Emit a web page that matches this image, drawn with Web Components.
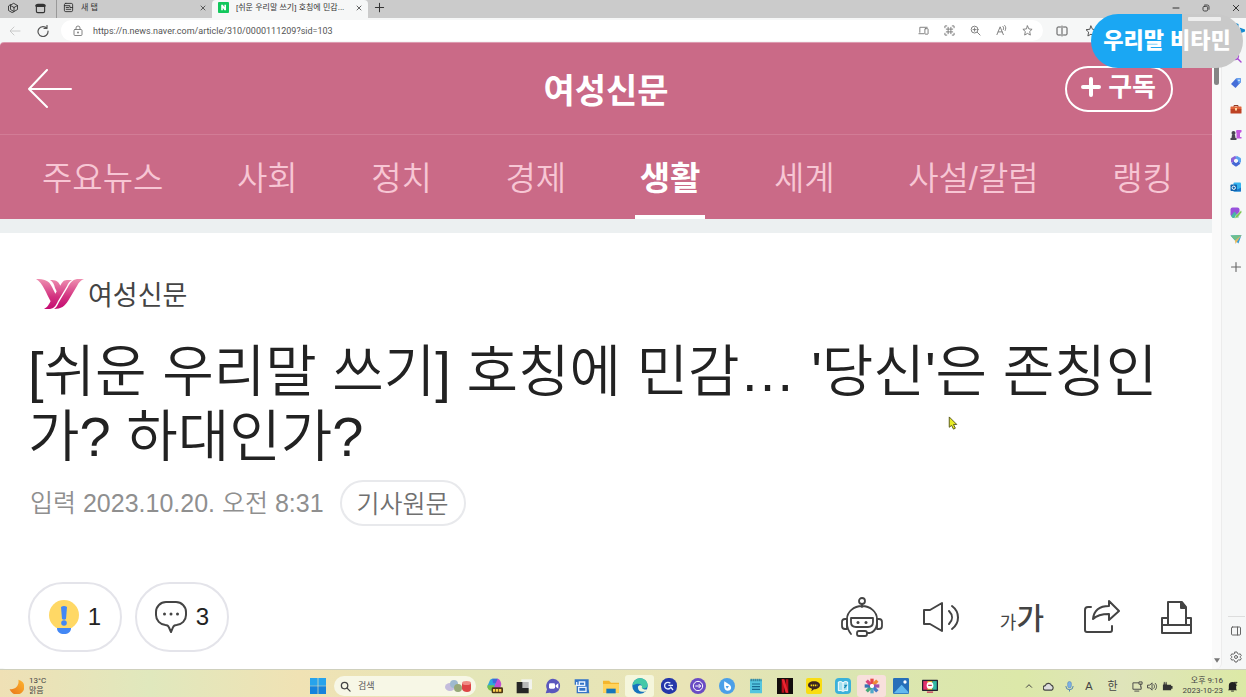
<!DOCTYPE html>
<html lang="ko">
<head>
<meta charset="utf-8">
<title>여성신문 - 생활</title>
<style>
body{margin:0;font-family:"Liberation Sans","Noto Sans CJK KR",sans-serif;color:#222;background:#f6f7f7}
</style>
</head>
<body>
<desktop-screen></desktop-screen>
<script>
const define=(name,css,html)=>{
  const tpl=document.createElement('template');
  tpl.innerHTML=`<style>*{box-sizing:border-box}button{font:inherit;color:inherit;background:none;border:0;padding:0;margin:0}a{color:inherit;text-decoration:none}${css}</style>${html}`;
  customElements.define(name,class extends HTMLElement{
    constructor(){super();this.attachShadow({mode:'open'}).append(tpl.content.cloneNode(true));}
  });
};

/* Each entry: viewBox, markup. Line icons inherit currentColor. */
const line='fill="none" stroke="currentColor" stroke-linecap="round" stroke-linejoin="round"';
const ICONS={
  workspaces:['0 0 24 24',`<g ${line} stroke-width="1.800"><path d="M14 3l7 4v8l-7 4-7-4V7z"/><path d="M14 11v8M14 11l7-4M14 11L7 7"/><path d="M7 5L3 8v9l7 4 3-1"/></g>`],
  actions:['0 0 24 24',`<g ${line} stroke-width="2.400"><rect x="3" y="3" width="18" height="18" rx="3"/><path d="M3 6h18" stroke-width="5"/></g>`],
  newtab:['0 0 24 24',`<g ${line} stroke-width="2"><rect x="3" y="3" width="18" height="18" rx="3"/><path d="M3 8h12v4h6M7 12h5M7 16h10"/></g>`],
  naver:['0 0 24 24','<rect width="24" height="24" rx="2" fill="#12c75c"/><path d="M7 18V6h3.500l3.500 5.500V6h3.500v12H14l-3.500-5.500V18z" fill="#fff"/>'],
  close:['0 0 24 24',`<path ${line} stroke-width="3" d="M4 4l16 16M20 4L4 20"/>`],
  plus:['0 0 24 24',`<path ${line} stroke-width="2.200" d="M12 3v18M3 12h18"/>`],
  boldplus:['0 0 20 20',`<path ${line} stroke-width="4" d="M10 2v16M2 10h16"/>`],
  min:['0 0 24 24',`<path ${line} stroke-width="3" d="M3 12h18"/>`],
  restore:['0 0 24 24',`<g ${line} stroke-width="2.600"><rect x="3" y="7" width="14" height="14" rx="4"/><path d="M8 3h8a5 5 0 0 1 5 5v8"/></g>`],
  back:['0 0 24 24',`<path ${line} stroke-width="1.800" d="M22 12H3M10 4l-8 8 8 8"/>`],
  reload:['0 0 24 24',`<path ${line} stroke-width="2.400" d="M20 6v-5M20 7h-6M20 7a10 10 0 1 0 2 5"/>`],
  lock:['0 0 24 24',`<g ${line} stroke-width="1.800"><rect x="4" y="9" width="16" height="12" rx="2"/><path d="M8 9V6a4 4 0 0 1 8 0v3"/></g><circle cx="12" cy="15" r="1.800" fill="currentColor"/>`],
  device:['0 0 24 24',`<g ${line} stroke-width="2"><path d="M4 16V5h16M2 19h11"/><rect x="15" y="8" width="7" height="12" rx="1"/></g>`],
  qr:['0 0 24 24',`<g ${line} stroke-width="2"><path d="M2 6V2h4M18 2h4v4M22 18v4h-4M6 22H2v-4M9 5v14M15 5v14M5 9h14M5 15h14"/></g>`],
  zoomin:['0 0 24 24',`<g ${line} stroke-width="2"><circle cx="10" cy="10" r="7.500"/><path d="M16 16l6 6M10 6.500v7M6.500 10h7"/></g>`],
  read:['0 0 24 24',`<g ${line} stroke-width="2"><path d="M2 21L9 4l7 17M5 15h8M15 3c2 2 2 4 1 7M19 1c3 3 3 7 1 11"/></g>`],
  star:['0 0 24 24',`<path ${line} stroke-width="2" d="M12 2l3 6.600 7 .8-5.200 4.800L18.200 22 12 18.300 5.800 22l1.400-7.800L2 9.400l7-.8z"/>`],
  split:['0 0 24 24',`<g ${line} stroke-width="2"><path d="M9 4H4a2 2 0 0 0-2 2v12a2 2 0 0 0 2 2h5M15 4h5a2 2 0 0 1 2 2v12a2 2 0 0 1-2 2h-5M12 2v20"/></g>`],
  panel:['0 0 24 24',`<g ${line} stroke-width="2"><rect x="3" y="4" width="18" height="16" rx="2"/><path d="M15 4v16"/></g>`],
  gear:['0 0 24 24',`<g ${line} stroke-width="2"><path d="M10 2h4l1 3 2.500 1.400 3-.7 2 3.500-2.200 2.300v1l2.200 2.300-2 3.500-3-.7L15 19l-1 3h-4l-1-3-2.500-1.400-3 .7-2-3.500 2.200-2.300v-1L1.500 9.200l2-3.500 3 .7L9 5z"/><circle cx="12" cy="12" r="3"/></g>`],
  tag:['0 0 24 24','<path d="M12 3l9-1 1 8-11 12L2 14z" fill="#466ed8"/><path d="M12 3l9-1 1 8-4 4z" fill="#68a5f0"/><circle cx="18" cy="6.500" r="1.600" fill="#fff"/>'],
  toolbox:['0 0 24 24','<path d="M8 8V5h8v3" fill="none" stroke="#8e3b25" stroke-width="2"/><rect x="1" y="7" width="22" height="6" rx="1" fill="#e0653a"/><rect x="1" y="12" width="22" height="9" rx="1" fill="#bd4224"/><rect x="10" y="10" width="4" height="5" fill="#ffd8a0"/>'],
  chess:['0 0 24 24','<path d="M13 2h10v4l-3 2v8h3v3H13V8l-1-2z" fill="#c256df"/><circle cx="7" cy="8" r="4" fill="#4a4653"/><path d="M4 11h6l1 7h2v4H1v-4h2z" fill="#4a4653"/>'],
  office:['0 0 24 24','<g fill="none" stroke-width="6" stroke-linejoin="round"><path d="M5 15V8l7-4" stroke="#8a62d8"/><path d="M12 4l7 4v7" stroke="#5ba3f0"/><path d="M19 15l-7 5-7-5" stroke="#4668d4"/></g>'],
  outlook:['0 0 24 24','<rect x="7" y="3" width="15" height="18" rx="2" fill="#35b3ee"/><path d="M7 13l8 4 7-4v8H7z" fill="#1976c9"/><rect x="1" y="7" width="13" height="13" rx="1.500" fill="#0f62ac"/><circle cx="7.500" cy="13.500" r="3.300" fill="none" stroke="#fff" stroke-width="2"/>'],
  designer:['0 0 24 24','<rect x="1" y="1" width="18" height="18" rx="4" fill="#9852dc"/><path d="M2 18l7-9 9 11-3 2H5z" fill="#49b6a6"/><path d="M22 7L12 17l-3 6 6-2 9-11z" fill="#7bc74d" stroke="#f6f7f7"/>'],
  plane:['0 0 24 24','<path d="M1 5l22-1-6 17-7-6z" fill="#379fdc"/><path d="M1 5l22-1-13 11z" fill="#6fc08a"/><path d="M10 15L23 4 11 22z" fill="#e7b95b"/>'],
  bing:['0 0 24 24','<path d="M3 2l6 2v14l4-2-2-5 11 4v4L9 24l-6-3z" fill="#168bd2"/>'],
  search:['0 0 24 24',`<g ${line} stroke-width="2.800"><circle cx="10" cy="10" r="7"/><path d="M15.500 15.500L22 22"/></g>`],
  arrow:['0 0 44 40',`<path ${line} stroke-width="2" d="M43 20H1M19 1L1 20l18 18"/>`],
  ymark:['0 0 48 30','<defs><linearGradient id="g" x1="0" y1="0" x2="0" y2="30" gradientUnits="userSpaceOnUse"><stop offset="0" stop-color="#ee8fb0"/><stop offset=".6" stop-color="#d2307f"/><stop offset="1" stop-color="#c40a72"/></linearGradient></defs><g fill="url(#g)"><path d="M0 0c8 0 13 1 16 8l4 8-5 7C10 14 7 4 0 0z"/><path d="M14 1c6 0 8 1 10 5l2 4-4 5-3-6c-1-4-2-6-5-8z"/><path d="M36 1h-5c-4 0-5 3-7 6L13 25c-1 2-3 4-5 5h6c5-1 6-4 8-8l9-15c1-3 3-5 5-6z"/><path d="M48 0h-7c-5 1-7 4-9 8l-9 15c-2 4-3 6-5 7 7 0 11-3 14-8l9-15c2-4 4-6 7-7z"/></g>'],
  bulb:['0 0 30 34','<circle cx="15" cy="15" r="15" fill="#ffd865"/><path d="M8 28h14c0 4-3 6-7 6s-7-2-7-6z" fill="#4287f5"/><path d="M12 7q3-2 6 0l-1 12q-2 1.500-4 0z" fill="#4287f5"/><circle cx="15" cy="23" r="2.800" fill="#4287f5"/>'],
  comment:['0 0 32 32',`<path ${line} stroke-width="2" d="M11 1h10a10 10 0 0 1 10 10v3a10 10 0 0 1-9.500 10c-2 0-3 1-3.600 2.500L16 31l-2-4.500c-.6-1.500-1.500-2.500-3.500-2.500A10 10 0 0 1 1 14v-3A10 10 0 0 1 11 1z"/><g fill="currentColor"><circle cx="9.500" cy="13" r="1.500"/><circle cx="16" cy="13" r="1.500"/><circle cx="22.500" cy="13" r="1.500"/></g>`],
  robot:['0 0 42 40',`<g ${line} stroke-width="1.800"><circle cx="21" cy="4" r="3"/><path d="M21 7v3M6 22a15 13 0 0 1 30 0M6 22v5c0 4 1 6 4 10M36 22v5c-1 6-3 8-7 9h-3"/><path d="M6 22H4a3 3 0 0 0-3 3v4a3 3 0 0 0 3 3h2zM36 22h2a3 3 0 0 1 3 3v4a3 3 0 0 1-3 3h-2z"/><path d="M10 21h22v4c0 4-2 5-5 5H15c-3 0-5-1-5-5z"/><rect x="16" y="34" width="10" height="5" rx="2"/></g><circle cx="17" cy="25.500" r="1.500" fill="currentColor"/><circle cx="25" cy="25.500" r="1.500" fill="currentColor"/>`],
  speaker:['0 0 37 32',`<path ${line} stroke-width="2" d="M1 9h6L19 2v28L7 23H1zM26 10c4 4 4 9 0 13M29 5c8 6 8 17 0 23"/>`],
  share:['0 0 36 34',`<path ${line} stroke-width="2" d="M7 7H4a3 3 0 0 0-3 3v20a2 2 0 0 0 2 2h23a2 2 0 0 0 2-2v-4M9 19c1-9 7-13 16-13V1l10 10-10 9v-6c-7 0-12 1-16 5z"/>`],
  print:['0 0 33 33',`<g ${line} stroke-width="2"><path d="M8 23V1h14l4 5v17M7 17H2v15h29V17h-4M2 24h29"/><path d="M21 1v6h5z" fill="currentColor"/></g>`],
  moon:['0 0 24 24','<defs><linearGradient id="g" x1="1" y1="0" x2="0" y2="1"><stop offset="0" stop-color="#ffb62e"/><stop offset="1" stop-color="#e8751a"/></linearGradient></defs><path d="M15 1a12 12 0 1 1-14 15c8 2 16-5 14-15z" fill="url(#g)"/>'],
  windows:['0 0 24 24','<g fill="#1683dc"><path d="M0 0h11.500v11.500H0zM12.500 0H24v11.500H12.500z" fill="#27a3ec"/><path d="M0 12.500h11.500V24H0zM12.500 12.500H24V24H12.500z"/></g>'],
  fruit:['0 0 28 14','<ellipse cx="5" cy="8" rx="5" ry="4" fill="#c4bcdc"/><circle cx="9" cy="5" r="4" fill="#9fb9cf"/><circle cx="13" cy="9" r="4" fill="#98a878"/><path d="M17 4h9v6q0 3-4 3t-5-3z" fill="#de4545"/><ellipse cx="21.500" cy="4" rx="4.500" ry="2" fill="#ef8b83"/>'],
  copilot:['0 0 24 24','<path d="M8 1h8l-5 15H4C0 16 0 12 2 9l2-5c1-2 2-3 4-3z" fill="#2fa6dd"/><path d="M15 1c4 0 5 3 6 6s0 8-4 9h-7z" fill="#c050d0"/><path d="M8 1h8l-3 7H9z" fill="#3d68dc"/><path d="M1 11h10l-2 8H6c-4 0-6-4-5-8z" fill="#73c04a"/><rect x="7" y="14" width="17" height="9" rx="2" fill="#4c3414"/><path d="M9 18.500h13" stroke="#ffcf4d" stroke-width="4" stroke-dasharray="3.500 1"/>'],
  taskview:['0 0 24 24','<rect x="8" y="2" width="16" height="15" fill="#f2f3ee"/><path d="M1 6h9v9h9v8H1z" fill="#262626"/><rect x="10" y="6" width="9" height="9" fill="#b8b8b8"/>'],
  chat:['0 0 24 24','<path d="M12 1a11 11 0 1 1-5 21l-6 1 2-6A11 11 0 0 1 12 1z" fill="#5a57bd"/><rect x="6" y="8" width="9" height="8" rx="2" fill="#fff"/><path d="M16 11l4-3v8l-4-3z" fill="#fff"/>'],
  blueapp:['0 0 24 24','<path d="M1 2h21v14l1 7H4V10H1z" fill="#3574c7"/><path d="M8 6h8v5H8zM7 14h11v6H7zM4 6v5h3" fill="none" stroke="#e8f2ff" stroke-width="2"/>'],
  folder:['0 0 24 24','<path d="M0 4h9l3 3h12v15H0z" fill="#f4b62e"/><path d="M0 9h24v13H0z" fill="#ffd35b"/><path d="M5 16h14v7H5z" fill="#1575bb"/>'],
  edge:['0 0 24 24','<circle cx="12" cy="12" r="11.500" fill="#1673bd"/><path d="M1 11C2-3 22-3 23.500 10c0 5-5 7-9 5 2-6-5-9-13.500-4z" fill="#43c8a8"/><path d="M9 13c-1 7 6 10 13 6 3-3-4-1-6-3-2-1-1-2-1-4-2-2-5-1-6 1z" fill="#eef5dc"/>'],
  round1:['0 0 24 24','<rect width="24" height="24" rx="11" fill="#2537a9"/><path d="M14 8a5 5 0 1 0 0 7M14 13l4 5M11 11h7" fill="none" stroke="#e6f0ff" stroke-width="2"/>'],
  round2:['0 0 24 24','<circle cx="12" cy="12" r="12" fill="#6a4bc4"/><circle cx="12" cy="12" r="7" fill="none" stroke="#fff" stroke-width="1.500"/><path d="M8 12h8M13 9l3 3-3 3" fill="none" stroke="#fff" stroke-width="1.500"/>'],
  round3:['0 0 24 24','<circle cx="12" cy="12" r="12" fill="#4ba0e8"/><path d="M8 5l8 5c4 4 2 9-3 9s-6-5-5-14z" fill="#fff"/><path d="M10 12h5l-3 4z" fill="#4ba0e8"/>'],
  note:['0 0 24 24','<rect x="3" y="2" width="18" height="21" rx="1" fill="#54c5df"/><path d="M6 9h12M6 13h12M6 17h12" stroke="#176a91" stroke-width="1.800"/><path d="M4 3h16" stroke="#266c83" stroke-width="4" stroke-dasharray="1.500 1.500"/>'],
  netflix:['0 0 24 24','<rect width="24" height="24" fill="#130d0d"/><path d="M7 2h4v20H7zM13 2h4v20h-4z" fill="#b60d19"/><path d="M7 2h4l6 20h-4z" fill="#ec2430"/>'],
  talk:['0 0 24 24','<rect width="24" height="24" rx="3" fill="#f9dd12"/><path d="M12 5c6 0 9 3 9 6s-4 6-9 6l-4 3 1-4c-4-1-6-3-6-5 0-3 3-6 9-6z" fill="#3b2520"/><path d="M7 11h10" stroke="#f9dd12" stroke-width="2.500" stroke-dasharray="2 1"/>'],
  clip:['0 0 24 24','<rect width="24" height="24" rx="6" fill="#3bb1da"/><path d="M5 6q4-2 7 1 3-3 7-1v13q-4-1-7 1-3-2-7-1zM12 7v12" fill="#a5e0ef" stroke="#fff" stroke-width="1.500"/><path d="M14 11h3l-3 4" stroke="#188bb8" stroke-width="2" fill="none"/>'],
  pinwheel:['0 0 24 24','<g stroke-width="5" fill="none"><path d="M12 9V1" stroke="#e84747"/><path d="M14 10l6-6" stroke="#ef8b34"/><path d="M15 12h8" stroke="#a352ab"/><path d="M14 14l6 6" stroke="#477ac5"/><path d="M12 15v8" stroke="#51a9ca"/><path d="M10 14l-6 6" stroke="#45a878"/><path d="M9 12H1" stroke="#3a72b4"/><path d="M10 10L4 4" stroke="#d9417b"/></g><circle cx="12" cy="12" r="3" fill="#fff"/>'],
  photo:['0 0 24 24','<rect width="24" height="24" rx="2" fill="#276fb9"/><path d="M1 23l12-13 10 11v2z" fill="#63b9ef"/><circle cx="18" cy="6" r="2.500" fill="#fff"/>'],
  tv:['0 0 26 24','<rect y="2" width="26" height="18" rx="1" fill="#242130"/><path d="M2 4h8v14H2z" fill="#e3326d"/><path d="M9 4h8v14H9z" fill="#f2c230"/><path d="M17 4h7v14h-7z" fill="#32b8a5"/><circle cx="13" cy="11" r="5.500" fill="#fff"/><path d="M10 11h6M8 22h10" stroke="#c82c54" stroke-width="2"/>'],
  chevron:['0 0 24 24',`<path ${line} stroke-width="3" d="M4 16l8-8 8 8"/>`],
  cloud:['0 0 24 24','<path d="M6 20a5 5 0 0 1-1-10 7 7 0 0 1 13-1 6 6 0 0 1 1 11z" fill="#ddd" stroke="#444" stroke-width="2.500"/>'],
  mic:['0 0 24 24','<rect x="8" y="1" width="8" height="14" rx="4" fill="#7db0e6" stroke="#477cad"/><path d="M4 11a8 8 0 0 0 16 0M12 19v4" fill="none" stroke="#477cad" stroke-width="2"/>'],
  net:['0 0 24 24',`<path ${line} stroke-width="2" d="M14 4H2v14h18v-5M6 22h9M19 7v6M16 2h6v5h-6z"/>`],
  vol:['0 0 24 24',`<path ${line} stroke-width="2" d="M2 9h4l5-5v16l-5-5H2zM15 8c2 3 2 6 0 8M18 5c4 4 4 10 0 14"/>`],
  battery:['0 0 24 24','<path d="M2 8h18v3h3v6h-3v3H2z" fill="#333"/><path d="M5 2v7M9 2v7M3 7h8" stroke="#333" stroke-width="2"/>'],
  bell:['0 0 24 24','<path d="M4 18V10a8 8 0 0 1 16 0v8l2 2H2z" fill="#222"/><path d="M9 22h6M15 3h7l-6 6h6" stroke="#222" stroke-width="2" fill="none"/>'],
  cursor:['0 0 10 16','<path d="M1 1v11l2.500-2 2 4 2-1-2-4H9z" fill="#e6ea24" stroke="#55561c"/>'],
  down:['0 0 8 6','<path d="M0 0h8L4 6z" fill="#777"/>']
};
customElements.define('ui-icon',class extends HTMLElement{
  connectedCallback(){
    if(this.shadowRoot)return;
    const [box,body]=ICONS[this.getAttribute('name')];
    this.attachShadow({mode:'open'}).innerHTML=`<style>:host{display:block;flex:none;width:12px;height:12px}svg{display:block;width:100%;height:100%}</style><svg viewBox="${box}" aria-hidden="true">${body}</svg>`;
  }
});

define('browser-tab',`
:host{display:flex;align-items:center;height:18px;padding:0 6px 3px 6px;gap:7px;font-size:8px;color:#333;min-width:0}
:host([active]){background:#f6f7f7;border-radius:4px 4px 0 0}
.t{flex:1;white-space:nowrap;overflow:hidden;line-height:12px;text-align:left}
.x ui-icon{width:6px;height:6px}`,
`<slot name="icon"></slot><button class="t"><slot></slot></button><button class="x" aria-label="탭 닫기"><ui-icon name="close"></ui-icon></button>`);

define('tab-strip',`
:host{display:flex;height:18px;background:#cbcbcb;color:#333}
.lead{display:flex;gap:16px;padding:2px 10px 0 7px;flex:none}
browser-tab{flex:0 1 156px}
ui-icon{width:11px;height:11px}
.lead ui-icon.w{width:12px;height:12px}
.lead button{height:12px}
.add{padding:0 6px 3px}
.ctl{margin-left:auto;display:flex;align-items:center;gap:22px;padding:0 6px 2px}
.ctl ui-icon{width:8px;height:8px}
browser-tab:first-of-type{border-left:1px solid #999}`,
`<div class="lead"><button aria-label="작업 영역"><ui-icon class="w" name="workspaces"></ui-icon></button><button aria-label="탭 작업"><ui-icon name="actions"></ui-icon></button></div>
<browser-tab><ui-icon slot="icon" name="newtab"></ui-icon>새 탭</browser-tab>
<browser-tab active><ui-icon slot="icon" name="naver"></ui-icon>[쉬운 우리말 쓰기] 호칭에 민감...</browser-tab>
<button class="add" aria-label="새 탭"><ui-icon name="plus"></ui-icon></button>
<div class="ctl"><button aria-label="최소화"><ui-icon name="min"></ui-icon></button><button aria-label="복원"><ui-icon name="restore"></ui-icon></button><button aria-label="닫기"><ui-icon name="close"></ui-icon></button></div>`);

define('tool-bar',`
:host{display:flex;align-items:center;height:25px;padding:0 149px 0 9px;background:#f6f7f7;color:#555}
.off{opacity:.3;margin-right:16px}
.addr{flex:1;display:flex;align-items:center;height:21px;margin:0 13px 0 12px;padding:0 10px 0 11px;border-radius:11px;background:#fff;color:#777}
input{flex:1;min-width:0;border:0;padding:0;margin:0 9px;background:none;font:9px/14px Roboto,sans-serif;color:#555;outline:0}
.acts{display:flex;gap:15px}
.acts ui-icon{width:11px;height:11px}
.out{display:flex;gap:17px}`,
`<button class="off" aria-label="뒤로"><ui-icon name="back"></ui-icon></button><button aria-label="새로 고침"><ui-icon name="reload"></ui-icon></button>
<div class="addr"><ui-icon name="lock"></ui-icon><input type="text" aria-label="주소" value="https://n.news.naver.com/article/310/0000111209?sid=103">
<div class="acts"><button aria-label="장치"><ui-icon name="device"></ui-icon></button><button aria-label="QR"><ui-icon name="qr"></ui-icon></button><button aria-label="확대"><ui-icon name="zoomin"></ui-icon></button><button aria-label="소리내어 읽기"><ui-icon name="read"></ui-icon></button><button aria-label="즐겨찾기"><ui-icon name="star"></ui-icon></button></div></div>
<div class="out"><button aria-label="분할"><ui-icon name="split"></ui-icon></button><button aria-label="즐겨찾기 목록"><ui-icon name="star"></ui-icon></button></div>`);

define('news-header',`
:host{display:block;background:#ca6a87;color:#fff;border-radius:4px 0 0 0;box-shadow:0 -1px 0 #dd9bb0}
.top{display:grid;grid-template-columns:1fr auto 1fr;align-items:center;height:92px;padding:0 28px;border-bottom:1px solid #d27c96}
.back{justify-self:start}
.back ui-icon{width:44px;height:40px}
h1{margin:0;padding-top:4px;font-size:34px;line-height:44px;font-weight:700}
.sub{justify-self:end;margin-right:11px;display:flex;align-items:center;gap:7px;height:46px;padding:0 15px 4px 14px;border:2px solid #fff;border-radius:23px;font-size:26px;line-height:36px;font-weight:700}
.sub ui-icon{width:20px;height:20px}
nav{display:flex;justify-content:space-between;height:84px;padding:0 34px 0 37px}
a{display:flex;align-items:center;padding:8px 5px 0;font-size:33px;line-height:44px;font-weight:350;color:#f7c6d4;border-bottom:4px solid transparent}
a[aria-current]{color:#fff;font-weight:700;border-color:#fff}`,
`<div class="top"><button class="back" aria-label="뒤로"><ui-icon name="arrow"></ui-icon></button><h1>여성신문</h1><button class="sub"><ui-icon name="boldplus"></ui-icon>구독</button></div>
<nav><a href="#">주요뉴스</a><a href="#">사회</a><a href="#">정치</a><a href="#">경제</a><a href="#" aria-current="page">생활</a><a href="#">세계</a><a href="#">사설/칼럼</a><a href="#">랭킹</a></nav>`);

define('article-head',`
:host{display:block;background:#fff;border-top:14px solid #ecf0f1;padding:45px 19px 16px 28px}
.brand{display:flex;align-items:center;gap:4px;height:32px;padding-left:8px;font-size:27px;line-height:32px;font-weight:400;color:#444}
.brand span{padding-top:4px}
.brand ui-icon{width:48px;height:30px}
h2{margin:29px 0 0;font-size:56px;line-height:65px;font-weight:350;word-break:break-all}
.meta{display:flex;align-items:center;gap:16px;margin-top:11px;font-size:25px;line-height:38px;color:#8f8f8f;font-weight:350;padding-left:2px}
.meta a{height:46px;padding:3px 15px 0;border:2px solid #e8e9ec;border-radius:23px;color:#707070}
.acts{display:flex;align-items:center;margin-top:56px}
.pill{display:flex;align-items:center;justify-content:center;width:94px;height:70px;border:2px solid #e4e4ea;border-radius:35px;font-size:24px;gap:9px;margin-right:13px}
.bulb{width:30px;height:34px}.comment{width:32px;height:32px;color:#444}
.tools{margin-left:auto;display:flex;align-items:center;gap:40px;color:#444}
.robot{width:42px;height:40px}.speaker{width:37px;height:32px}.share{width:36px;height:34px}.print{width:33px;height:33px}
.size{padding-top:8px;font-size:30px;line-height:36px;font-weight:500;white-space:nowrap}.size small{font-size:18px;font-weight:400}`,
`<a class="brand" href="#"><ui-icon name="ymark"></ui-icon><span>여성신문</span></a>
<h2>[쉬운 우리말 쓰기] 호칭에 민감… '당신'은 존칭인가? 하대인가?</h2>
<div class="meta"><span>입력 2023.10.20. 오전 8:31</span><a href="#">기사원문</a></div>
<div class="acts"><button class="pill"><ui-icon class="bulb" name="bulb"></ui-icon>1</button><button class="pill"><ui-icon class="comment" name="comment"></ui-icon>3</button>
<div class="tools"><button aria-label="요약봇"><ui-icon class="robot" name="robot"></ui-icon></button><button aria-label="듣기"><ui-icon class="speaker" name="speaker"></ui-icon></button><button class="size"><small>가</small>가</button><button aria-label="공유"><ui-icon class="share" name="share"></ui-icon></button><button aria-label="인쇄"><ui-icon class="print" name="print"></ui-icon></button></div></div>`);

define('scroll-track',`
:host{display:flex;flex-direction:column;justify-content:space-between;align-items:center;width:10px;background:#fafafa;padding:6px 0;border-radius:0 0 6px 0;border-right:1px solid #ececec}
i{width:5px;height:36px;border-radius:3px;background:#858585}
ui-icon{width:6px;height:5px}`,
`<i></i><ui-icon name="down"></ui-icon>`);

define('side-rail',`
:host{display:flex;flex-direction:column;align-items:center;gap:14px;width:24px;padding:8px 0 6px 4px;color:#666}
.grow{flex:1}hr{width:17px;border:0;border-top:1px solid #ddd;margin:0 0 -6px}
button{height:12px}.violet{color:#a64bd2}.add{margin-top:2px}`,
`<button class="violet" aria-label="검색"><ui-icon name="search"></ui-icon></button><button aria-label="쇼핑"><ui-icon name="tag"></ui-icon></button><button aria-label="도구"><ui-icon name="toolbox"></ui-icon></button><button aria-label="게임"><ui-icon name="chess"></ui-icon></button><button aria-label="Microsoft 365"><ui-icon name="office"></ui-icon></button><button aria-label="Outlook"><ui-icon name="outlook"></ui-icon></button><button aria-label="Designer"><ui-icon name="designer"></ui-icon></button><button aria-label="Drop"><ui-icon name="plane"></ui-icon></button><button class="add" aria-label="추가"><ui-icon name="plus"></ui-icon></button><span class="grow"></span><hr><button aria-label="사이드바"><ui-icon name="panel"></ui-icon></button><button aria-label="설정"><ui-icon name="gear"></ui-icon></button>`);

define('task-bar',`
:host{display:grid;grid-template-columns:1fr auto 1fr;align-items:center;height:28px;padding:5px 8px 0 9px;border-top:1px solid #cfd0bd;background:linear-gradient(90deg,#efe0b5,#e0e8bd 12%,#f0e2b4 24%,#e4e6b8 38%,#e9e4b6 55%,#dbe5b3 67%,#dce8a9 82%,#dfe4ba 90%,#dce9a6);color:#444;font-size:8px;line-height:10px}
.weather{display:flex;align-items:center;gap:5px;text-align:left}.weather ui-icon{width:15px;height:15px}
.weather,.clock{font-family:Roboto,"Noto Sans CJK KR",sans-serif}
.apps{display:flex;align-items:center}
.apps>button{display:grid;place-items:center;width:29px;height:22px}
.apps button ui-icon{width:16px;height:16px}
.apps .on{background:#f5f6dc;border-radius:3px}.apps .pink{background:#f8e0dc;border-radius:3px}
.find{display:flex;align-items:center;gap:7px;width:142px;height:20px;margin:0 4px 0 2px;padding:0 3px 0 6px;border-radius:10px;background:#f7f7e6}
.find ui-icon{width:11px;height:11px}.find .fruit{width:28px;height:14px}
input{flex:1;min-width:0;border:0;background:none;padding:0;outline:0;font:9px/14px "Noto Sans CJK KR",sans-serif}
input::placeholder{color:#555;opacity:1}
.tray{display:flex;align-items:center;justify-content:flex-end;gap:10px}
.tray ui-icon{width:11px;height:11px}.tray .c{width:8px;height:8px}
.k{font-size:11px;line-height:14px}.lang{margin-left:5px}
.q{display:flex;gap:4px;margin-left:4px}.clock{text-align:right}
.bell{margin-left:-6px}`,
`<button class="weather"><ui-icon name="moon"></ui-icon><span>13°C<br>맑음</span></button>
<div class="apps"><button aria-label="시작"><ui-icon name="windows"></ui-icon></button>
<label class="find"><ui-icon name="search"></ui-icon><input type="text" placeholder="검색" aria-label="검색"><ui-icon class="fruit" name="fruit"></ui-icon></label>
${['copilot','taskview','chat','blueapp','folder','edge','round1','round2','round3','note','netflix','talk','clip','pinwheel','photo','tv'].map(n=>`<button aria-label="${n}"${n==='edge'?' class="on"':n==='pinwheel'?' class="pink"':''}><ui-icon name="${n}"></ui-icon></button>`).join('')}</div>
<div class="tray"><button aria-label="숨겨진 아이콘"><ui-icon class="c" name="chevron"></ui-icon></button><ui-icon name="cloud"></ui-icon><ui-icon name="mic"></ui-icon><button class="k">A</button><button class="k lang">한</button><button class="q" aria-label="빠른 설정"><ui-icon name="net"></ui-icon><ui-icon name="vol"></ui-icon><ui-icon name="battery"></ui-icon></button><button class="clock">오후 9:16<br>2023-10-23</button><ui-icon class="bell" name="bell"></ui-icon></div>`);

define('channel-badge',`
:host{display:flex;align-items:center;justify-content:center;width:152px;height:54px;border-radius:27px;background:linear-gradient(90deg,#1aa7f3 91px,#c9c9c9 91px);color:#fff;font-size:22px;line-height:32px;font-weight:900;white-space:nowrap}
i{position:absolute;top:3px;right:22px;width:33px;height:4px;border-radius:1px;background:#eee}`,
`<i></i><slot></slot>`);

define('desktop-screen',`
:host{display:flex;flex-direction:column;min-height:100vh;position:relative;overflow:hidden}
.body{flex:1;display:flex}
main{flex:1;min-width:0;background:#fff;border-radius:4px 0 0 6px}
channel-badge{position:absolute;top:14px;right:3px}
.cursor{position:absolute;top:416px;left:948px;width:10px;height:15px}
.bing{position:absolute;top:22px;right:0}
task-bar{flex:none}`,
`<tab-strip></tab-strip><tool-bar></tool-bar>
<div class="body"><main><news-header></news-header><article-head></article-head></main><scroll-track></scroll-track><side-rail></side-rail></div>
<task-bar></task-bar>
<ui-icon class="bing" name="bing"></ui-icon><channel-badge>우리말 비타민</channel-badge><ui-icon class="cursor" name="cursor"></ui-icon>`);
</script>
</body>
</html>
